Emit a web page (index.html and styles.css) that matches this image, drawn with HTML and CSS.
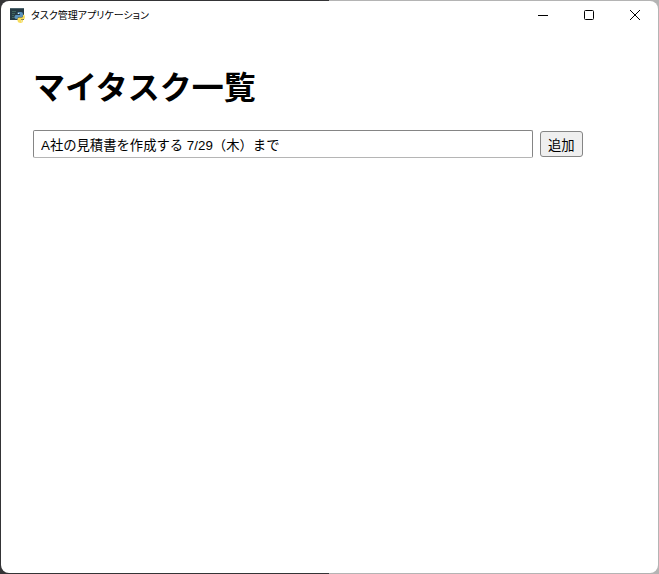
FILE: index.html
```html
<!DOCTYPE html>
<html lang="ja">
<head>
<meta charset="utf-8">
<meta name="viewport" content="width=device-width, initial-scale=1">
<title>タスク管理アプリケーション</title>
<link rel="stylesheet" href="styles.css">
</head>
<body>
<div class="window">
  <header class="titlebar">
    <svg class="app-icon" viewBox="0 0 15 15" aria-hidden="true">
      <path fill="#263b45" d="M0 0h14v12H0z"/>
      <path fill="#4d646d" d="M0 0h14v1H0z"/>
      <path stroke="#3f665f" d="M2 3.500h4M2 5.500h3M2 7.500h2M2 9.500h3"/>
      <path fill="#5a92bd" d="M8 4h3q2 0 2 2v1.500q0 1.500-1.500 1.500H9q-1.500 0-1.500 2H6q-1.500 0-1.500-2T6 7h4V6H7.500V5z"/>
      <path fill="#f7dc5c" d="M13 6.500q2 0 2 2.500t-2 2.500H11v.5h2v1q0 2-2.500 2T7.500 13v-2q0-1.500 1.500-1.500h2.500q1.500 0 1.500-1.500z"/>
      <path fill="#dcecf2" d="M8 5h1v1H8zM11 12.500h1v1h-1z"/>
    </svg>
    <span class="title">タスク管理アプリケーション</span>
    <div class="controls">
      <button class="control" type="button" aria-label="最小化">
        <svg class="glyph" viewBox="0 0 12 12"><path d="M1 6.500h10"/></svg>
      </button>
      <button class="control" type="button" aria-label="最大化">
        <svg class="glyph" viewBox="0 0 12 12"><rect x="1.500" y="1.500" width="9" height="9" rx="1"/></svg>
      </button>
      <button class="control" type="button" aria-label="閉じる">
        <svg class="glyph" viewBox="0 0 12 12"><path d="M1 1l10 10M11 1L1 11"/></svg>
      </button>
    </div>
  </header>
  <main class="content">
    <h1 class="heading">マイタスク一覧</h1>
    <form class="task-form">
      <input class="task-input" type="text" aria-label="タスク" value="A社の見積書を作成する 7/29（木）まで">
      <button class="add-button" type="button">追加</button>
    </form>
  </main>
</div>
</body>
</html>
```
FILE: styles.css
```css
* {
  box-sizing: border-box;
}

body {
  margin: 0;
  padding: 1px;
  min-height: 100vh;
  display: flex;
  background: linear-gradient(90deg, #343436 50%, #b4b4b4 50%);
  color: #000;
  font-family: "Liberation Sans", "Noto Sans CJK JP", sans-serif;
}

.window {
  flex: 1;
  background: #fff;
  border-radius: 8px;
  overflow: hidden;
}

.titlebar {
  display: flex;
  align-items: center;
  height: 28px;
  padding-left: 9px;
}

.app-icon {
  width: 15px;
  height: 15px;
}

.title {
  flex: 1;
  margin-left: 6px;
  font-family: "Noto Sans CJK JP", sans-serif;
  font-size: 10px;
  line-height: 16px;
  font-feature-settings: "palt";
}

.controls {
  display: flex;
}

.control {
  display: flex;
  align-items: center;
  justify-content: center;
  width: 46px;
  height: 28px;
  padding: 0;
  border: 0;
  background: none;
}

.glyph {
  width: 12px;
  height: 12px;
  fill: none;
  stroke: #000;
}

.content {
  padding: 34px 32px;
}

.heading {
  margin: 0 0 17px;
  font-size: 32px;
  line-height: 50px;
}

.task-form {
  display: flex;
  align-items: center;
  gap: 7px;
}

.task-input {
  flex: 0 1 500px;
  min-width: 0;
  height: 28px;
  padding: 4px 7px;
  border: 1px solid #858585;
  border-bottom-color: #b5b5b5;
  border-radius: 2px;
  background: #fff;
  color: #000;
  font-family: inherit;
}

.add-button {
  height: 26px;
  padding: 0 7px;
  border: 1px solid #858585;
  border-radius: 3px;
  background: #efefef;
  color: #000;
  font-family: inherit;
}
```
